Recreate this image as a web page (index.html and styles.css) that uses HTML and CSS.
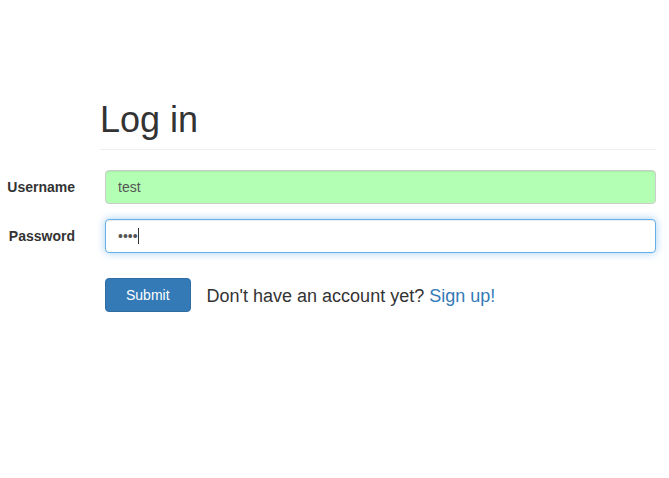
FILE: index.html
```html
<!DOCTYPE html>
<html lang="en">
<head>
<meta charset="utf-8">
<title>Log in</title>
<link rel="stylesheet" href="styles.css">
</head>
<body>
<div class="page">
  <div class="page-header">
    <h1>Log in</h1>
  </div>
  <form class="login-form" onsubmit="return false;">
    <label class="control-label" for="username">Username</label>
    <input class="form-control autofilled" id="username" type="text" value="test">
    <label class="control-label" for="password">Password</label>
    <div class="field-wrap">
      <input class="form-control focused" id="password" type="password" value="test">
      <span class="caret"></span>
    </div>
    <div class="actions">
      <button class="btn-primary" type="submit">Submit</button>
      <span class="signup-text">Don't have an account yet? <a href="#" class="link">Sign up!</a></span>
    </div>
  </form>
</div>
</body>
</html>
```

FILE: styles.css
```css
html, body {
  margin: 0;
  padding: 0;
  background: #fff;
}
body {
  font-family: "Liberation Sans", Arial, sans-serif;
  font-size: 14px;
  color: #333;
}
.page {
  padding: 0 13px 0 0;
}
.page-header {
  margin: 100px 0 0 100px;
  padding-bottom: 9px;
  border-bottom: 1px solid #eee;
}
.page-header h1 {
  margin: 0;
  font-size: 36px;
  line-height: 40px;
  font-weight: 400;
  color: #333;
}
.login-form {
  margin-top: 20px;
  display: grid;
  grid-template-columns: 75px 1fr;
  column-gap: 30px;
  row-gap: 15px;
}
.control-label {
  text-align: right;
  font-weight: 700;
  font-size: 14px;
  line-height: 34px;
  height: 34px;
  color: #333;
}
.form-control {
  display: block;
  box-sizing: border-box;
  width: 100%;
  height: 34px;
  margin: 0;
  padding: 6px 12px;
  font-family: "Liberation Sans", Arial, sans-serif;
  font-size: 14px;
  line-height: 20px;
  color: #555;
  background: #fff;
  border: 1px solid #ccc;
  border-radius: 4px;
  box-shadow: inset 0 1px 1px rgba(0,0,0,.075);
  outline: none;
}
.form-control.autofilled {
  background: #b3ffb3;
}
.form-control.focused {
  border-color: #66afe9;
  box-shadow: inset 0 1px 1px rgba(0,0,0,.075), 0 0 8px rgba(102,175,233,.6);
}
.field-wrap {
  position: relative;
}
.caret {
  position: absolute;
  left: 33px;
  top: 9px;
  width: 1px;
  height: 16px;
  background: #333;
}
.actions {
  grid-column: 2;
  margin-top: 10px;
  display: flex;
  align-items: center;
}
.btn-primary {
  box-sizing: border-box;
  height: 34px;
  padding: 6px 20px;
  font-family: "Liberation Sans", Arial, sans-serif;
  font-size: 14px;
  line-height: 20px;
  color: #fff;
  background: #337ab7;
  border: 1px solid #2e6da4;
  border-radius: 4px;
  cursor: pointer;
}
.signup-text {
  margin-left: 16px;
  font-size: 18px;
  line-height: 24px;
  color: #333;
  padding-top: 2px;
}
.link {
  color: #337ab7;
  text-decoration: none;
}
```
